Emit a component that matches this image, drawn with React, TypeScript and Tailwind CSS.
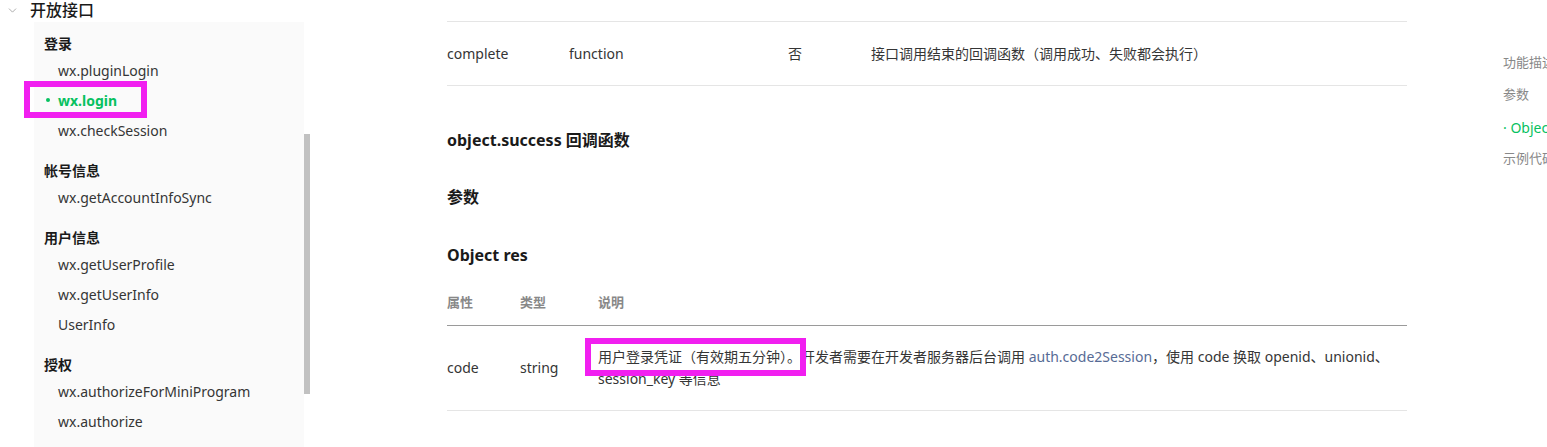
import { ChevronDown } from "lucide-react";

type NavGroup = { title: string; items: string[] };

const groups: NavGroup[] = [
  { title: "登录", items: ["wx.pluginLogin", "wx.login", "wx.checkSession"] },
  { title: "帐号信息", items: ["wx.getAccountInfoSync"] },
  { title: "用户信息", items: ["wx.getUserProfile", "wx.getUserInfo", "UserInfo"] },
  { title: "授权", items: ["wx.authorizeForMiniProgram", "wx.authorize"] },
];

const toc = ["功能描述", "参数", "· Object res", "示例代码"];

function Sidebar() {
  return (
    <aside className="w-[310px] shrink-0 flex flex-col">
      <div className="h-[20px] mb-[2px] flex items-center">
        <ChevronDown size={13} strokeWidth={1.5} className="ml-[6px] text-[#9a9a9a]" />
        <span className="ml-[11px] text-[16px] font-medium text-[#1a1a1a]">开放接口</span>
      </div>
      <div className="flex">
        <div className="ml-[34px] w-[270px] h-[430px] bg-[#fafafa] pl-[10px] pt-[9px]">
          {groups.map((g, gi) => (
            <div key={g.title} className={gi === 0 ? "" : "mt-[13px]"}>
              <div className="h-[24px] flex items-center text-[14px] font-semibold text-[#1a1a1a]">
                {g.title}
              </div>
              {g.items.map((item) => {
                const active = item === "wx.login";
                return (
                  <div key={item} className="relative h-[30px] flex items-center pl-[14px]">
                    {active ? (
                      <>
                        <span className="absolute left-[2px] top-[13px] w-[4px] h-[4px] rounded-full bg-[#07c160]" />
                        <span className="text-[14px] font-bold text-[#07c160]">{item}</span>
                        <span className="absolute left-[-20px] top-[-4px] w-[123px] h-[37px] border-[6px] border-[#f11ff0]" />
                      </>
                    ) : (
                      <span className="text-[14px] text-[#353535]">{item}</span>
                    )}
                  </div>
                );
              })}
            </div>
          ))}
        </div>
        <div className="w-[6px] mt-[112px] h-[260px] bg-[#c1c1c1]" />
      </div>
    </aside>
  );
}

function Main() {
  return (
    <main className="ml-[137px] w-[960px] shrink-0 pt-[21px] text-[#1a1a1a]">
      <div className="h-[65px] border-y border-[#e5e5e5] grid grid-cols-[122px_219px_83px_1fr] items-center text-[14px] text-[#353535]">
        <span>complete</span>
        <span>function</span>
        <span>否</span>
        <span>接口调用结束的回调函数（调用成功、失败都会执行）</span>
      </div>

      <h3 className="mt-[42px] h-[24px] leading-[24px] text-[16px] font-bold">object.success 回调函数</h3>
      <h4 className="mt-[33px] h-[24px] leading-[24px] text-[16px] font-bold">参数</h4>
      <h4 className="mt-[34px] h-[24px] leading-[24px] text-[16px] font-bold">Object res</h4>

      <div className="mt-[25px] pb-[13px] border-b border-[#9a9a9a] grid grid-cols-[73px_78px_1fr] text-[13px] leading-[20px] font-semibold text-[#888]">
        <span>属性</span>
        <span>类型</span>
        <span>说明</span>
      </div>
      <div className="py-[20px] border-b border-[#e5e5e5] grid grid-cols-[73px_78px_1fr] items-center text-[14px] leading-[22px] text-[#353535]">
        <span>code</span>
        <span>string</span>
        <span>
          <span className="relative inline-block">
            用户登录凭证（有效期五分钟）。
            <span className="absolute left-[-13px] top-[-8px] w-[221px] h-[38px] border-[6px] border-[#f11ff0]" />
          </span>
          开发者需要在开发者服务器后台调用 <span className="text-[#576b95]">auth.code2Session</span>，使用 code 换取 openid、unionid、
          <br />
          session_key 等信息
        </span>
      </div>
    </main>
  );
}

function Toc() {
  return (
    <nav className="ml-[96px] pt-[47px] whitespace-nowrap text-[13px]">
      {toc.map((t) => (
        <div
          key={t}
          className={`h-[32px] flex items-center ${t.startsWith("·") ? "text-[#07c160] text-[14px]" : "text-[#888]"}`}
        >
          {t}
        </div>
      ))}
    </nav>
  );
}

export default function App() {
  return (
    <div className="w-[1547px] h-[447px] overflow-hidden bg-white flex font-['Noto_Sans','Noto_Sans_CJK_SC',sans-serif]">
      <Sidebar />
      <Main />
      <Toc />
    </div>
  );
}
